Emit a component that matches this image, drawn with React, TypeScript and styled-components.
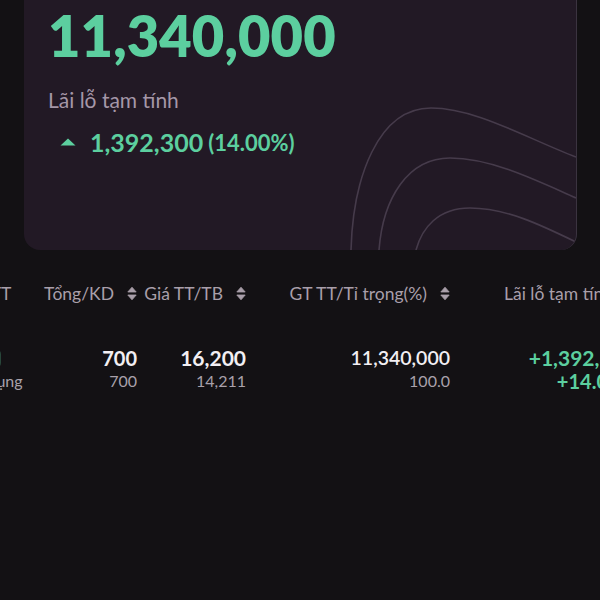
import React, { useLayoutEffect, useRef } from 'react';
import styled, { createGlobalStyle } from 'styled-components';

const colors = {
  page: '#131114',
  card: '#221925',
  cardEdge: '#3b3340',
  green: '#5ccf9f',
  chip: '#28463a',
  label: '#a597a8',
  header: '#a99faa',
  text: '#f2eff3',
  muted: '#a9a1ab',
  contour: '#463b4b',
};

const GlobalStyle = createGlobalStyle`
  html, body {
    margin: 0;
    padding: 0;
    background: ${colors.page};
    font-family: Lato, "Noto Sans", sans-serif;
  }
  * { box-sizing: border-box; }
`;

const Screen = styled.div`
  height: 600px;
  overflow-y: auto;
  overflow-x: hidden;
  background: ${colors.page};
  scrollbar-width: none;
  &::-webkit-scrollbar { display: none; }
`;

const Content = styled.div`
  min-height: 720px;
  padding-top: 16px;
`;

const SummaryCard = styled.section`
  position: relative;
  margin: 0 23px 0 24px;
  padding: 24px 24px 92px;
  background: ${colors.card};
  border-radius: 16px;
  border-right: 1px solid ${colors.cardEdge};
  overflow: hidden;
`;

const CardTitle = styled.div`
  font-size: 16px;
  line-height: 22px;
  margin-bottom: 9px;
  color: ${colors.label};
`;

const BigValue = styled.div`
  font-size: 56px;
  line-height: 70px;
  font-weight: 800;
  color: ${colors.green};
  letter-spacing: 0.1px;
`;

const PnlLabel = styled.div`
  margin-top: 17px;
  font-size: 21px;
  line-height: 24px;
  color: ${colors.label};
`;

const PnlRow = styled.div`
  display: flex;
  align-items: center;
  gap: 14px;
  margin-top: 14px;
  padding-left: 12px;
  height: 32px;
  color: ${colors.green};
`;

const PnlAmount = styled.span`
  font-size: 25px;
  font-weight: 700;
`;

const PnlPercent = styled.span`
  font-size: 22px;
  font-weight: 700;
  margin-left: -9px;
`;

const Contour = styled.svg`
  position: absolute;
  right: 0;
  bottom: 0;
  width: 240px;
  height: 160px;
  pointer-events: none;
`;

const TableScroll = styled.div`
  margin-top: 23px;
  overflow-x: auto;
  scrollbar-width: none;
  &::-webkit-scrollbar { display: none; }
`;

const Grid = styled.div`
  display: grid;
  grid-template-columns: 130px 100px 109px 204px 186px;
  width: max-content;
`;

const HeadCell = styled.div<{ $align?: 'left' | 'right' }>`
  display: flex;
  align-items: center;
  justify-content: ${p => (p.$align === 'left' ? 'flex-start' : 'flex-end')};
  gap: 13px;
  height: 40px;
  padding-left: ${p => (p.$align === 'left' ? '16px' : '0')};
  font-size: 17.5px;
  color: ${colors.header};
  white-space: nowrap;
`;

const BodyCell = styled.div<{ $align?: 'left' | 'right'; $tone?: 'plain' | 'up' }>`
  display: flex;
  flex-direction: column;
  align-items: ${p => (p.$align === 'left' ? 'flex-start' : 'flex-end')};
  padding: 33px 0 16px ${p => (p.$align === 'left' ? '16px' : '0')};
  color: ${p => (p.$tone === 'up' ? colors.green : colors.text)};
  white-space: nowrap;
`;

const SymbolLine = styled.div`
  display: flex;
  align-items: center;
  gap: 8px;
  height: 24px;
`;

const Chip = styled.span`
  padding: 3px 7px;
  border-radius: 5px;
  background: ${colors.chip};
  color: ${colors.green};
  font-size: 11px;
  font-weight: 700;
  line-height: 13px;
`;

const MainValue = styled.span<{ $weight?: number; $size?: number }>`
  font-size: ${p => p.$size ?? 20}px;
  line-height: 24px;
  font-weight: ${p => p.$weight ?? 700};
`;

const SubValue = styled.span<{ $tone?: 'plain' | 'up' }>`
  font-size: ${p => (p.$tone === 'up' ? 20 : 16)}px;
  line-height: 22px;
  font-weight: ${p => (p.$tone === 'up' ? 700 : 400)};
  color: ${p => (p.$tone === 'up' ? colors.green : colors.muted)};
`;

const SortIcon = () => (
  <svg width="10" height="15" viewBox="0 0 10 15" fill={colors.header}>
    <path d="M5 1.2 L9.2 6 H0.8 Z" strokeLinejoin="round" stroke={colors.header} strokeWidth="0.8" />
    <path d="M5 13.8 L9.2 9 H0.8 Z" strokeLinejoin="round" stroke={colors.header} strokeWidth="0.8" />
  </svg>
);

const UpTriangle = () => (
  <svg width="16" height="8" viewBox="0 0 16 8">
    <path d="M8 0.5 L15.5 7.5 H0.5 Z" fill={colors.green} />
  </svg>
);

const columns = [
  { key: 'code', label: 'Mã/Loại TT', align: 'left' as const, sortable: false },
  { key: 'qty', label: 'Tổng/KD', align: 'right' as const, sortable: true },
  { key: 'price', label: 'Giá TT/TB', align: 'right' as const, sortable: true },
  { key: 'value', label: 'GT TT/Tỉ trọng(%)', align: 'right' as const, sortable: true },
  { key: 'pnl', label: 'Lãi lỗ tạm tính', align: 'right' as const, sortable: true },
];

const App: React.FC = () => {
  const screenRef = useRef<HTMLDivElement>(null);
  const tableRef = useRef<HTMLDivElement>(null);

  // the screenshot is taken mid-scroll, both ways
  useLayoutEffect(() => {
    if (screenRef.current) screenRef.current.scrollTop = 70;
    if (tableRef.current) tableRef.current.scrollLeft = 93;
  }, []);

  return (
    <>
      <GlobalStyle />
      <Screen ref={screenRef}>
        <Content>
          <SummaryCard>
            <CardTitle>Tổng giá trị thị trường</CardTitle>
            <BigValue>11,340,000</BigValue>
            <PnlLabel>Lãi lỗ tạm tính</PnlLabel>
            <PnlRow>
              <UpTriangle />
              <PnlAmount>1,392,300</PnlAmount>
              <PnlPercent>(14.00%)</PnlPercent>
            </PnlRow>
            <Contour viewBox="0 0 240 160" fill="none" stroke={colors.contour} strokeWidth="1.6">
              <path d="M15 160 C17 88 42 18 95 18 C140 18 190 48 240 67" />
              <path d="M43 160 C47 108 72 68 114 68 C155 68 200 90 240 108" />
              <path d="M80 160 C86 138 102 118 134 118 C170 118 205 135 240 152" />
            </Contour>
          </SummaryCard>

          <TableScroll ref={tableRef}>
            <Grid>
              {columns.map(c => (
                <HeadCell key={c.key} $align={c.align}>
                  {c.label}
                  {c.sortable && <SortIcon />}
                </HeadCell>
              ))}

              <BodyCell $align="left">
                <SymbolLine>
                  <MainValue>HPG</MainValue>
                  <Chip>CS</Chip>
                </SymbolLine>
                <SubValue>Được sử dụng</SubValue>
              </BodyCell>
              <BodyCell>
                <MainValue>700</MainValue>
                <SubValue>700</SubValue>
              </BodyCell>
              <BodyCell>
                <MainValue $size={21}>16,200</MainValue>
                <SubValue>14,211</SubValue>
              </BodyCell>
              <BodyCell>
                <MainValue $weight={600} $size={19.5}>11,340,000</MainValue>
                <SubValue>100.0</SubValue>
              </BodyCell>
              <BodyCell $tone="up">
                <MainValue $size={21}>+1,392,300</MainValue>
                <SubValue $tone="up">+14.00%</SubValue>
              </BodyCell>
            </Grid>
          </TableScroll>
        </Content>
      </Screen>
    </>
  );
};

export default App;
